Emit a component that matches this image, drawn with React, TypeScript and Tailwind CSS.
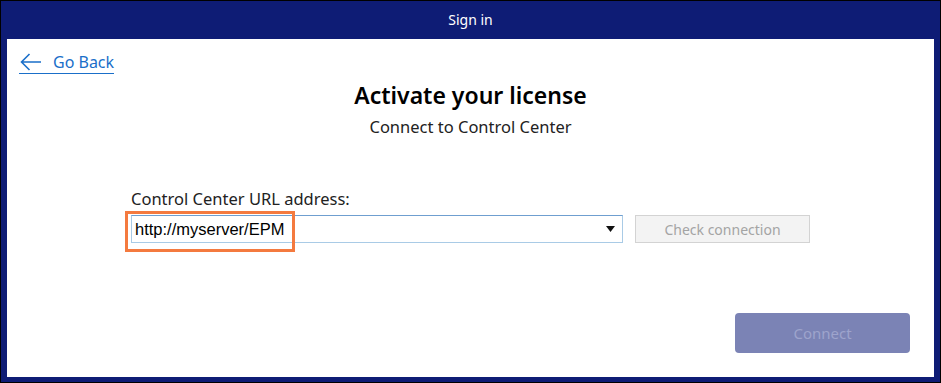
const font = { fontFamily: '"Noto Sans", "Open Sans", sans-serif' }

export default function App() {
  return (
    <div className="w-[941px] h-[383px] border border-black bg-[#0e1c75] flex flex-col px-[6px] pb-[5px]" style={font}>
      <header className="h-[38px] flex items-center justify-center text-white text-[14px] pb-[1px]">Sign in</header>
      <div className="flex-1 bg-white flex flex-col">
        <a className="mt-[12px] ml-[12px] w-fit flex items-center text-[#1a6fc9] text-[16px] leading-[22px] border-b border-[#1a6fc9] cursor-pointer">
          <svg width="22" height="18" viewBox="0 0 22 18" className="ml-[1px] mr-[11px]" fill="none" stroke="#1a6fc9" strokeWidth="1.6">
            <path d="M1.5 9H21M9.5 1L1.5 9l8 8" />
          </svg>
          Go Back
        </a>
        <h1 className="text-center text-[23px] font-semibold text-black leading-[30px] mt-[6px]">Activate your license</h1>
        <p className="text-center text-[16.5px] text-[#222] leading-[22px] mt-[6px]">Connect to Control Center</p>
        <div className="ml-[124px] mt-[50px]">
          <label className="block text-[16.5px] text-[#222] leading-[22px]">Control Center URL address:</label>
          <div className="flex items-center mt-[5px]">
            <div className="relative w-[492px] h-[28px] border border-[#a9cbe6] border-t-[#6f9fd0] bg-white flex items-center justify-between px-[3px]">
              <span className="text-[16.5px] text-black" style={{ fontFamily: '"Liberation Sans", Arial, sans-serif' }}>http://myserver/EPM</span>
              <svg width="9" height="6" viewBox="0 0 9 6" className="mr-[4px]"><path d="M0 0h9L4.5 6z" fill="#111" /></svg>
              <div className="absolute left-[-7px] top-[-5px] w-[170px] h-[41px] border-[3px] border-[#f47a3f]" />
            </div>
            <button className="ml-[12px] w-[175px] h-[28px] border border-[#d3d3d3] bg-[#f3f3f3] text-[#a4a4a4] text-[14px]">Check connection</button>
          </div>
        </div>
        <div className="flex justify-end mt-auto mb-[24px] mr-[24px]">
          <button className="w-[175px] h-[40px] rounded-[4px] bg-[#7b83b5] text-[#9ea4cc] text-[15px]">Connect</button>
        </div>
      </div>
    </div>
  )
}
